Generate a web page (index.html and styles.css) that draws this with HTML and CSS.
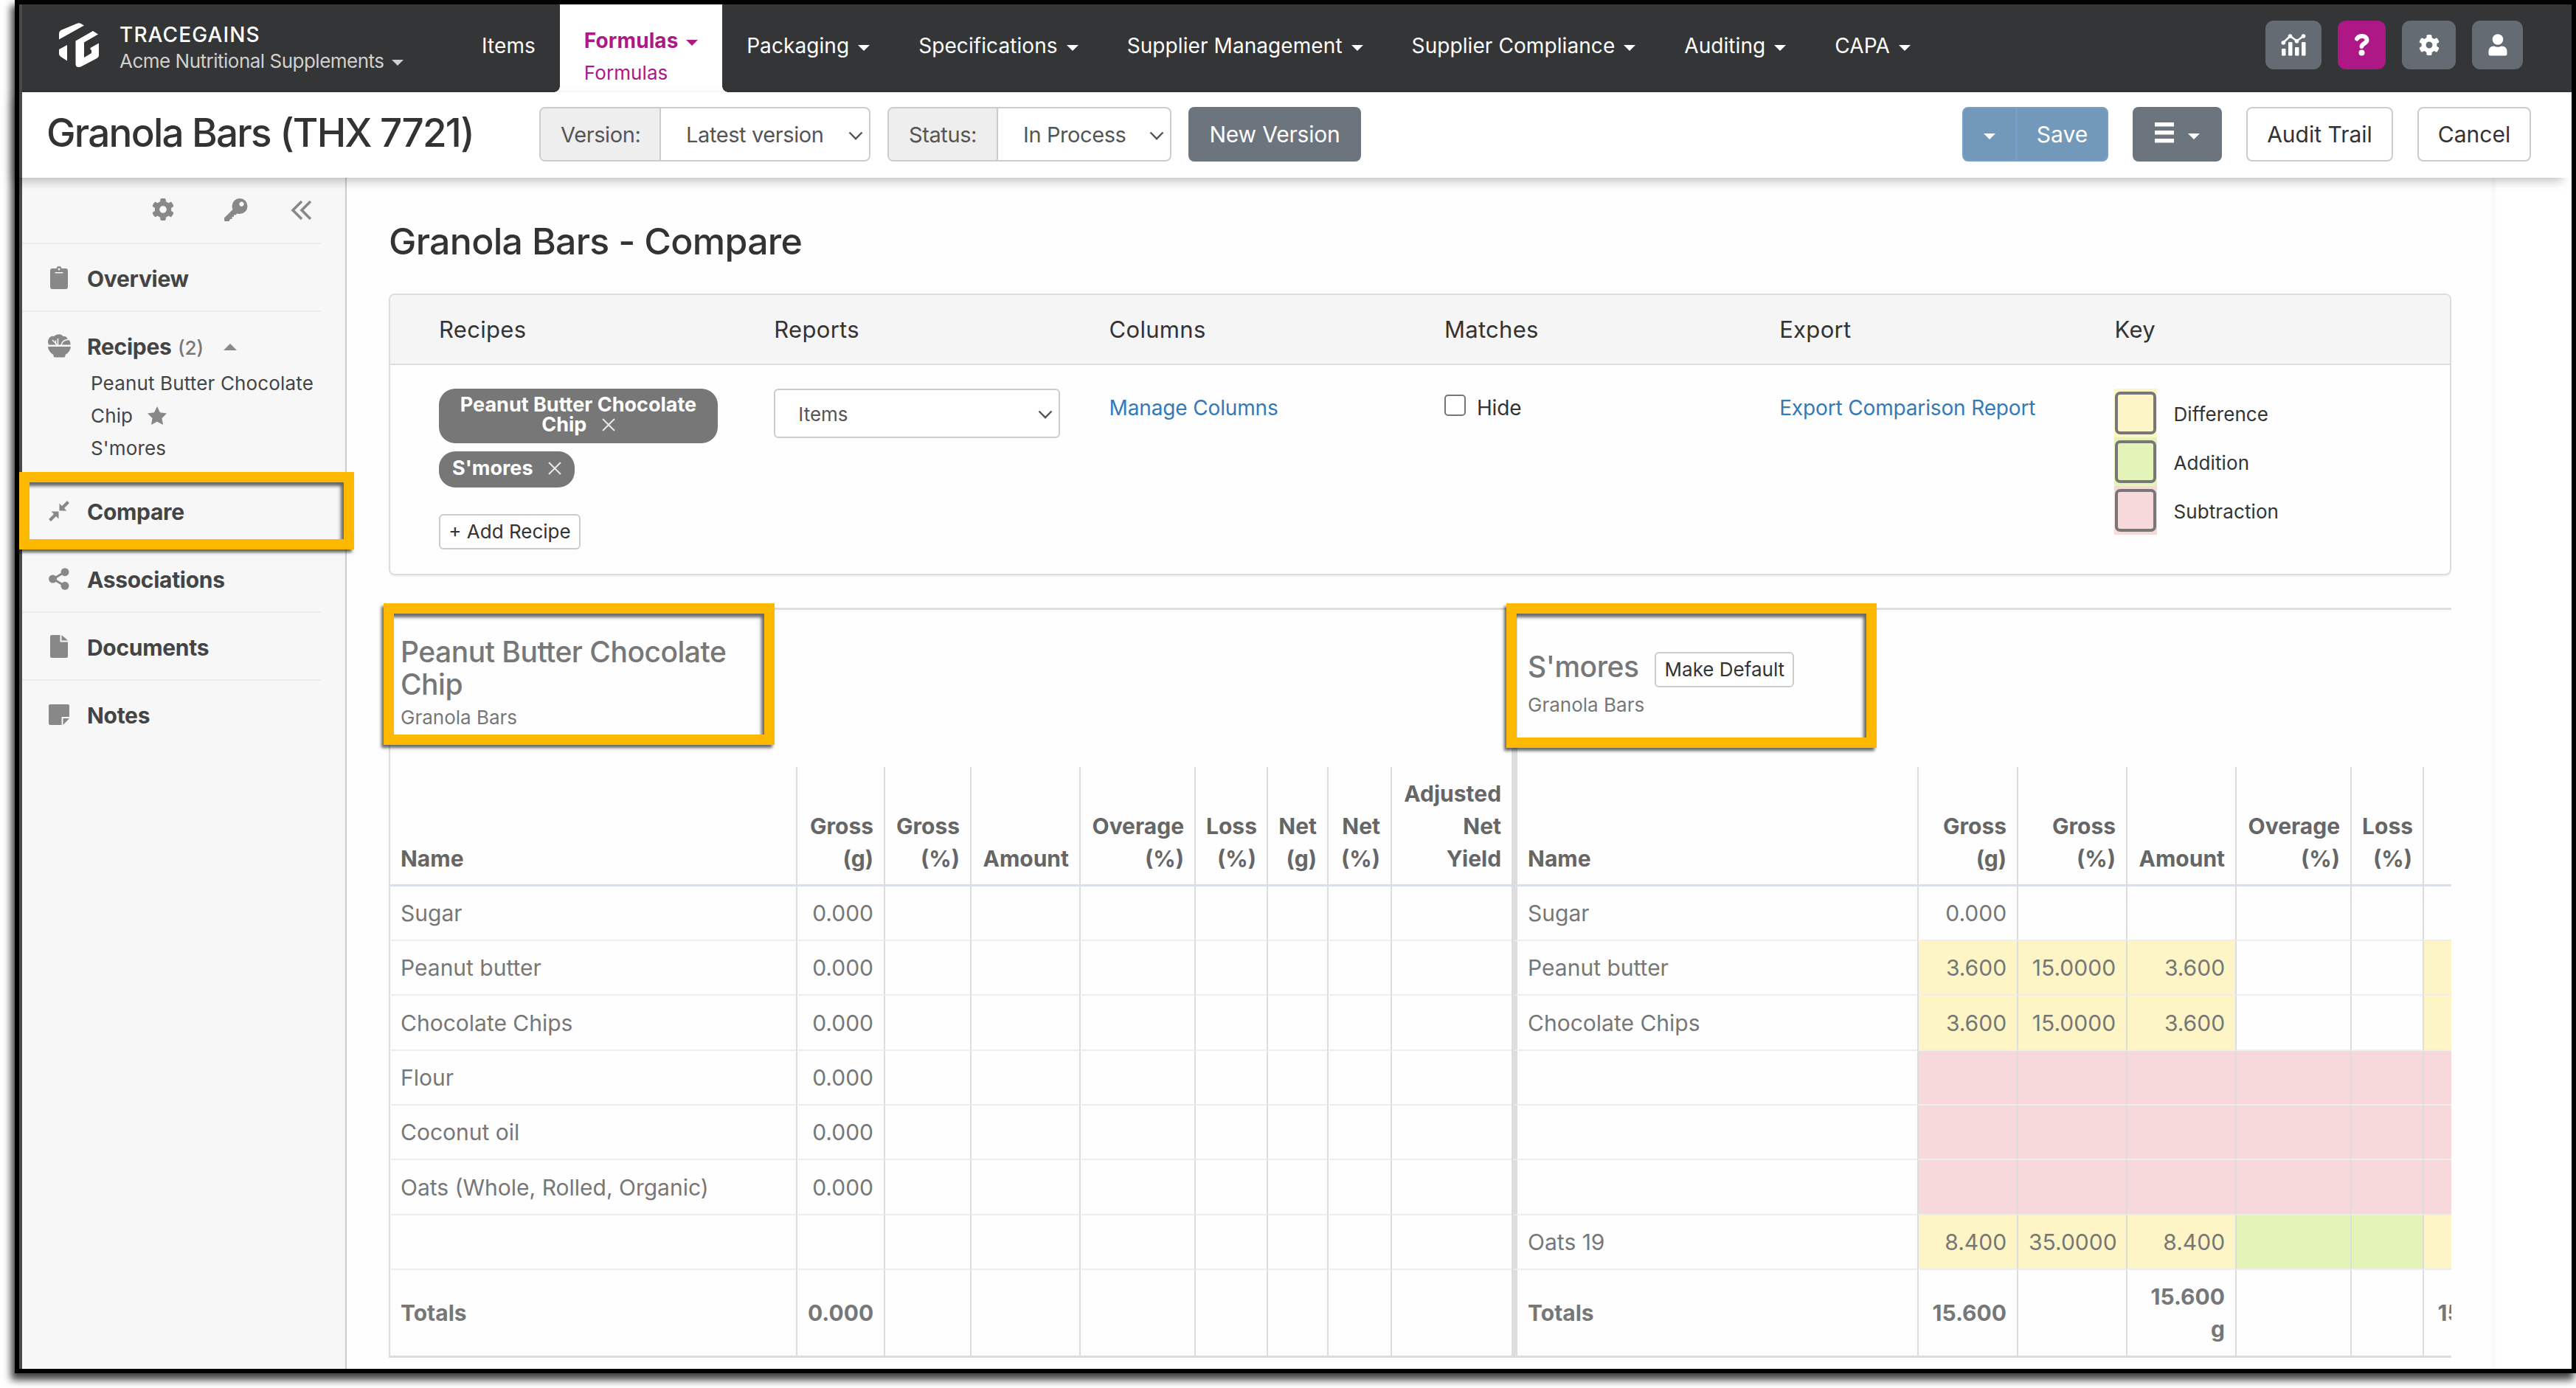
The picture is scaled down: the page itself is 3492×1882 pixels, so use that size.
FILE: index.html
```html
<!DOCTYPE html>
<html lang="en">
  <head>
    <meta charset="UTF-8" />
    <meta name="viewport" content="width=device-width, initial-scale=1.0" />
    <title>Granola Bars - Compare</title>
    <link rel="stylesheet" href="styles.css">
  </head>
  <body>
    <svg class="sprite">
      <symbol id="gear" viewBox="0 0 30 30">
        <circle cx="15" cy="15" r="8" fill="none" stroke="currentColor" stroke-width="6.4" />
        <g fill="currentColor">
          <rect x="11.2" y="0" width="7.6" height="7" rx="2" />
          <rect x="11.2" y="0" width="7.6" height="7" rx="2" transform="rotate(60 15 15)" />
          <rect x="11.2" y="0" width="7.6" height="7" rx="2" transform="rotate(120 15 15)" />
          <rect x="11.2" y="0" width="7.6" height="7" rx="2" transform="rotate(180 15 15)" />
          <rect x="11.2" y="0" width="7.6" height="7" rx="2" transform="rotate(240 15 15)" />
          <rect x="11.2" y="0" width="7.6" height="7" rx="2" transform="rotate(300 15 15)" />
        </g>
      </symbol>
      <symbol id="chevron" viewBox="0 0 20 12">
        <path d="M1.5 1.5 10 10.2 18.5 1.5" fill="none" stroke="currentColor" stroke-width="2.4" />
      </symbol>
    </svg>

    <div class="window">
      <header class="topbar">
        <svg class="logo" viewBox="0 0 54 60" fill="#fff">
          <path d="M0 22.500V14.500Q0 11.500 2.500 10L24 1Q27 -.5 29.500 1L34 3.500Z" />
          <path d="M11 30V51.500L2.500 46Q0 44.500 0 42V36Z" />
          <path d="M46 11 53 15.500 34 26.500V47L44 41V37L42.500 36V34L54 27.500V44Q54 46.500 51.500 48L29.500 59.500Q22.500 61.500 22.500 55.500V24.500Z" />
        </svg>
        <div class="brand">
          <div class="brand-name">TRACEGAINS</div>
          <div class="brand-company">Acme Nutritional Supplements <i class="caret"></i></div>
        </div>
        <nav class="nav">
          <a class="nav-item">Items</a>
          <a class="nav-item active">
            <span class="nav-title">Formulas <i class="caret"></i></span>
            <span class="nav-sub">Formulas</span>
          </a>
          <a class="nav-item">Packaging <i class="caret"></i></a>
          <a class="nav-item">Specifications <i class="caret"></i></a>
          <a class="nav-item">Supplier Management <i class="caret"></i></a>
          <a class="nav-item">Supplier Compliance <i class="caret"></i></a>
          <a class="nav-item">Auditing <i class="caret"></i></a>
          <a class="nav-item">CAPA <i class="caret"></i></a>
        </nav>
        <div class="tools">
          <a class="tool tool-chart">
            <svg width="34" height="30" viewBox="0 0 34 30" fill="#fff">
              <path d="M3.500 11.500 12.500 3 21.500 9.500 30.500 3" fill="none" stroke="#fff" stroke-width="2.600" />
              <circle cx="3.300" cy="12" r="2.800" /><circle cx="12.500" cy="3" r="2.800" />
              <circle cx="21.500" cy="9.800" r="2.800" /><circle cx="30.500" cy="3" r="2.800" />
              <rect x="1" y="20" width="5.500" height="9.500" rx="1" />
              <rect x="10" y="11" width="5.500" height="18.500" rx="1" />
              <rect x="19" y="18" width="5.500" height="11.500" rx="1" />
              <rect x="28" y="11" width="5.500" height="18.500" rx="1" />
            </svg>
          </a>
          <a class="tool tool-help">
            <svg width="20" height="30" viewBox="0 0 20 30">
              <path d="M3 6.500C6 1.500 16.500 1.500 16.500 8.500 16.500 13 10 12.500 9.500 17" fill="none" stroke="#fff" stroke-width="6" stroke-linecap="round" />
              <circle cx="9.500" cy="25.500" r="4" fill="#fff" />
            </svg>
          </a>
          <a class="tool tool-gear"><svg width="28" height="28"><use href="#gear" /></svg></a>
          <a class="tool tool-user">
            <svg width="26" height="30" viewBox="0 0 26 30" fill="#fff">
              <circle cx="13" cy="7.500" r="7.300" />
              <path d="M8 16.500Q13 19 18 16.500 25.500 16.500 25.500 24V27Q25.500 29.500 23 29.500H3Q.5 29.500 .5 27V24Q.5 16.500 8 16.500Z" />
            </svg>
          </a>
        </div>
      </header>

      <div class="actionbar">
        <h1 class="page-title">Granola Bars (THX 7721)</h1>
        <div class="field field-version">
          <span class="addon">Version:</span>
          <span class="value">Latest version</span>
          <svg class="chevron"><use href="#chevron" /></svg>
        </div>
        <div class="field field-status">
          <span class="addon">Status:</span>
          <span class="value">In Process</span>
          <svg class="chevron"><use href="#chevron" /></svg>
        </div>
        <a class="btn btn-grey btn-new">New Version</a>
        <div class="actions">
          <div class="btn-group">
            <a class="btn btn-toggle"><i class="caret"></i></a>
            <a class="btn btn-save">Save</a>
          </div>
          <a class="btn btn-grey btn-menu">
            <svg width="26" height="28" viewBox="0 0 26 28" fill="#fff">
              <rect y="0" width="26" height="5.500" /><rect y="11" width="26" height="5.500" /><rect y="22" width="26" height="5.500" />
            </svg>
            <i class="caret"></i>
          </a>
          <a class="btn btn-default btn-audit">Audit Trail</a>
          <a class="btn btn-default btn-cancel">Cancel</a>
        </div>
      </div>

      <div class="layout">
        <aside class="sidebar">
          <div class="side-tools">
            <svg width="30" height="30"><use href="#gear" /></svg>
            <svg width="32" height="32" viewBox="0 0 32 32" fill="currentColor">
              <path fill-rule="evenodd" d="M21 0A10.500 10.500 0 0 1 21 21Q19 21 17.500 20.500L15.500 22.500H13V25H10.500V28H8L6.500 31H1.500Q0 31 0 29.500V26.500L11.500 15Q10.500 13 10.500 10.500A10.500 10.500 0 0 1 21 0ZM23.500 4.500A3.200 3.200 0 1 0 23.510 4.500Z" />
            </svg>
            <svg width="28" height="28" viewBox="0 0 28 28" fill="none" stroke="currentColor" stroke-width="3.600">
              <path d="M15 2 3 14 15 26M27 2 15 14 27 26" />
            </svg>
          </div>
          <div class="side-row">
            <span class="side-icon">
              <svg width="24" height="32" viewBox="0 0 24 32" fill="currentColor">
                <path fill-rule="evenodd" d="M3 3H8.500Q9 0 12 0 15 0 15.500 3H21Q24 3 24 6V28Q24 31 21 31H3Q0 31 0 28V6Q0 3 3 3ZM12 2.500A1.500 1.500 0 1 0 12.010 2.500ZM6.500 8V9.500H17.500V8Z" />
              </svg>
            </span>
            <b>Overview</b>
          </div>
          <div class="side-row side-recipes">
            <span class="side-icon">
              <svg width="31" height="32" viewBox="0 0 31 32" fill="currentColor">
                <path d="M0 17H31Q30.500 24 23.500 28V29.500Q23.500 31.500 21.500 31.500H9.500Q7.500 31.500 7.500 29.500V28Q.5 24 0 17Z" />
                <path d="M1 14.500Q-1 10 1 6.500 3.500 2 8 3 11 0 14 .5 18-.5 20.500 3 25.500 2.500 26 6 31 9 30.500 14.500Z" />
                <path d="M6 8 13.500 15.500M13.500 6V15M10.500 8.500V14M18 15Q19.500 7.500 28 7.500" fill="none" stroke="#f7f7f7" stroke-width="1.500" />
              </svg>
            </span>
            <b>Recipes</b> <span class="side-count">(2)</span>
            <i class="caret-up"></i>
            <div class="side-list">
              <div>Peanut Butter Chocolate</div>
              <div>Chip
                <svg class="star" width="26" height="26" viewBox="0 0 26 26" fill="currentColor"><path d="M13 0 17 8.300 26 9.600 19.500 16 21 25 13 20.800 5 25 6.500 16 0 9.600 9 8.300Z" /></svg>
              </div>
              <div>S'mores</div>
            </div>
          </div>
          <div class="side-row">
            <span class="side-icon">
              <svg width="28" height="28" viewBox="0 0 28 28" fill="currentColor">
                <path d="M14.500 13.500V3.500L18 7 25 0 28 3 21 10 24.500 13.500ZM13.500 14.500V24.500L10 21 3 28 0 25 7 18 3.500 14.500Z" />
              </svg>
            </span>
            <b>Compare</b>
          </div>
          <div class="side-row">
            <span class="side-icon">
              <svg width="28" height="30" viewBox="0 0 28 30" fill="currentColor">
                <path d="M22 5.500 6 15 22 24.500" fill="none" stroke="currentColor" stroke-width="3" />
                <circle cx="22" cy="5.700" r="5.500" /><circle cx="5.600" cy="15" r="5.500" /><circle cx="22" cy="24.300" r="5.500" />
              </svg>
            </span>
            <b>Associations</b>
          </div>
          <div class="side-row">
            <span class="side-icon">
              <svg width="24" height="32" viewBox="0 0 24 32" fill="currentColor">
                <path d="M2 0H13.500V9.500H24V29Q24 31 22 31H2Q0 31 0 29V2Q0 0 2 0ZM15.500 0 24 7.500H15.500Z" />
              </svg>
            </span>
            <b>Documents</b>
          </div>
          <div class="side-row side-last">
            <span class="side-icon">
              <svg width="28" height="28" viewBox="0 0 28 28" fill="currentColor">
                <path d="M2 0H26Q28 0 28 2V17H17.500V28H2Q0 28 0 26V2Q0 0 2 0ZM28 19 19.500 28V19Z" />
              </svg>
            </span>
            <b>Notes</b>
          </div>
          <div class="highlight highlight-side"></div>
        </aside>

        <main class="content">
          <h2 class="content-title">Granola Bars - Compare</h2>

          <section class="panel">
            <div class="panel-head">
              <span>Recipes</span><span>Reports</span><span>Columns</span>
              <span>Matches</span><span>Export</span><span>Key</span>
            </div>
            <div class="panel-body">
              <div>
                <div class="pill pill-wide">Peanut Butter Chocolate<br />Chip
                  <svg class="remove" viewBox="0 0 18 18"><path d="M1 1 17 17M17 1 1 17" /></svg>
                </div>
                <div class="pill">S'mores
                  <svg class="remove" viewBox="0 0 18 18"><path d="M1 1 17 17M17 1 1 17" /></svg>
                </div>
                <a class="btn-small btn-add">+ Add Recipe</a>
              </div>
              <div>
                <div class="report-select">Items <svg class="chevron"><use href="#chevron" /></svg></div>
              </div>
              <div class="panel-text"><a class="link">Manage Columns</a></div>
              <div class="panel-text hide-option"><span class="checkbox"></span>Hide</div>
              <div class="panel-text"><a class="link">Export Comparison Report</a></div>
              <div>
                <div class="key-row"><span class="swatch diff"><i></i></span>Difference</div>
                <div class="key-row"><span class="swatch add"><i></i></span>Addition</div>
                <div class="key-row"><span class="swatch sub"><i></i></span>Subtraction</div>
              </div>
            </div>
          </section>

          <div class="compare">
            <table class="compare-table">
              <colgroup>
                <col style="width: 552px" /><col style="width: 119px" /><col style="width: 117px" />
                <col style="width: 148px" /><col style="width: 156px" /><col style="width: 98px" />
                <col style="width: 82px" /><col style="width: 86px" /><col style="width: 164px" />
                <col style="width: 550px" /><col style="width: 135px" /><col style="width: 148px" />
                <col style="width: 148px" /><col style="width: 156px" /><col style="width: 98px" />
                <col style="width: 135px" />
              </colgroup>
              <thead>
                <tr class="recipe-row">
                  <th colspan="9" class="recipe-cell">
                    <div class="recipe-name">Peanut Butter Chocolate<br />Chip</div>
                    <div class="recipe-family">Granola Bars</div>
                  </th>
                  <th colspan="7" class="recipe-cell recipe-right split">
                    <div class="recipe-name">S'mores <a class="btn-small btn-make">Make Default</a></div>
                    <div class="recipe-family">Granola Bars</div>
                  </th>
                </tr>
                <tr class="head-row">
                  <th>Name</th><th>Gross<br />(g)</th><th>Gross<br />(%)</th><th>Amount</th>
                  <th>Overage<br />(%)</th><th>Loss<br />(%)</th><th>Net<br />(g)</th><th>Net<br />(%)</th>
                  <th>Adjusted<br />Net<br />Yield</th>
                  <th class="split">Name</th><th>Gross<br />(g)</th><th>Gross<br />(%)</th><th>Amount</th>
                  <th>Overage<br />(%)</th><th>Loss<br />(%)</th><th></th>
                </tr>
              </thead>
              <tbody>
                <tr>
                  <td>Sugar</td><td>0.000</td><td></td><td></td><td></td><td></td><td></td><td></td><td></td>
                  <td class="split">Sugar</td><td>0.000</td><td></td><td></td><td></td><td></td><td></td>
                </tr>
                <tr>
                  <td>Peanut butter</td><td>0.000</td><td></td><td></td><td></td><td></td><td></td><td></td><td></td>
                  <td class="split">Peanut butter</td><td class="diff">3.600</td><td class="diff">15.0000</td><td class="diff">3.600</td><td></td><td></td><td class="diff"></td>
                </tr>
                <tr>
                  <td>Chocolate Chips</td><td>0.000</td><td></td><td></td><td></td><td></td><td></td><td></td><td></td>
                  <td class="split">Chocolate Chips</td><td class="diff">3.600</td><td class="diff">15.0000</td><td class="diff">3.600</td><td></td><td></td><td class="diff"></td>
                </tr>
                <tr>
                  <td>Flour</td><td>0.000</td><td></td><td></td><td></td><td></td><td></td><td></td><td></td>
                  <td class="split"></td><td class="sub"></td><td class="sub"></td><td class="sub"></td><td class="sub"></td><td class="sub"></td><td class="sub"></td>
                </tr>
                <tr>
                  <td>Coconut oil</td><td>0.000</td><td></td><td></td><td></td><td></td><td></td><td></td><td></td>
                  <td class="split"></td><td class="sub"></td><td class="sub"></td><td class="sub"></td><td class="sub"></td><td class="sub"></td><td class="sub"></td>
                </tr>
                <tr>
                  <td>Oats (Whole, Rolled, Organic)</td><td>0.000</td><td></td><td></td><td></td><td></td><td></td><td></td><td></td>
                  <td class="split"></td><td class="sub"></td><td class="sub"></td><td class="sub"></td><td class="sub"></td><td class="sub"></td><td class="sub"></td>
                </tr>
                <tr>
                  <td></td><td></td><td></td><td></td><td></td><td></td><td></td><td></td><td></td>
                  <td class="split">Oats 19</td><td class="diff">8.400</td><td class="diff">35.0000</td><td class="diff">8.400</td><td class="add"></td><td class="add"></td><td class="diff"></td>
                </tr>
                <tr class="totals">
                  <td>Totals</td><td>0.000</td><td></td><td></td><td></td><td></td><td></td><td></td><td></td>
                  <td class="split">Totals</td><td>15.600</td><td></td><td>15.600<br />g</td><td></td><td></td><td>15.600</td>
                </tr>
              </tbody>
            </table>
          </div>
          <div class="highlight highlight-left"></div>
          <div class="highlight highlight-right"></div>
        </main>
        <div class="gutter"></div>
      </div>
    </div>
  </body>
</html>
```

FILE: styles.css
```css
* {
  box-sizing: border-box;
}
body {
  margin: 0;
  padding-left: 20px;
  height: 1882px;
  overflow: hidden;
  background: #fff;
  font-family: Inter, "Liberation Sans", sans-serif;
  font-size: 30px;
  color: #333;
}
h1,
h2 {
  margin: 0;
  font-weight: 500;
}
svg {
  display: block;
  flex: none;
}
.sprite {
  position: absolute;
  width: 0;
  height: 0;
}
.window {
  display: flex;
  flex-direction: column;
  height: 1862px;
  border: 6px solid #000;
  box-shadow: -4px 8px 10px 1px rgba(0, 0, 0, 0.75);
}

/* top bar */
.topbar {
  display: flex;
  height: 119px;
  padding-left: 54px;
  border-left: 4px solid #4a4a4a;
  background: #343536;
  color: #fff;
}
.logo {
  width: 54px;
  height: 60px;
  margin: 25px 28px 0 -4px;
}
.brand {
  width: 458px;
  padding-top: 23px;
  line-height: 36px;
}
.brand-name {
  font-size: 28px;
  font-weight: 500;
  letter-spacing: 1.1px;
}
.brand-company {
  font-size: 26px;
  color: #d0d0d0;
  letter-spacing: -0.5px;
}
.caret {
  display: inline-block;
  border: 8px solid transparent;
  border-top-color: currentColor;
  border-bottom: 0;
  vertical-align: 3px;
  margin-left: 4px;
}
.nav {
  display: flex;
}
.nav-item {
  padding: 36px 33px 0;
  font-size: 28px;
  letter-spacing: 0.08px;
  line-height: 40px;
  white-space: nowrap;
}
.nav-item.active {
  padding-top: 29px;
  background: #fff;
  color: #ad1886;
  position: relative;
}
/* dark corners rounding off the foot of the tab */
.nav-item.active::before,
.nav-item.active::after {
  content: "";
  position: absolute;
  bottom: 0;
  width: 8px;
  height: 8px;
}
.nav-item.active::before {
  left: -8px;
  background: radial-gradient(circle at 0 0, #343536 7.5px, #fff 8px);
}
.nav-item.active::after {
  right: -8px;
  background: radial-gradient(circle at 100% 0, #343536 7.5px, #fff 8px);
}
.nav-title {
  display: block;
  font-weight: 700;
}
.nav-sub {
  display: block;
  margin-top: 4px;
  font-size: 26px;
}
.tools {
  display: flex;
  gap: 22px;
  margin: 22px 66px 0 auto;
}
.tool {
  display: flex;
  align-items: center;
  justify-content: center;
  height: 66px;
  border-radius: 11px;
  background: #646b73;
}
.tool-chart {
  width: 76px;
}
.tool-help {
  width: 65px;
  background: #ad1886;
}
.tool-gear {
  width: 73px;
}
.tool-user {
  width: 69px;
}

/* action bar */
.actionbar {
  display: flex;
  height: 116px;
  padding: 20px 55px 0 33px;
  border-left: 4px solid #4a4a4a;
  background: #fff;
  position: relative;
  z-index: 1;
  box-shadow: -10px 6px 14px -2px rgba(0, 0, 0, 0.26);
}
.page-title {
  flex: 0 0 668px;
  font-size: 53px;
  line-height: 70px;
  letter-spacing: -1.8px;
  white-space: nowrap;
}
.field {
  display: flex;
  height: 74px;
  margin-right: 23px;
  border: 2px solid #ccc;
  border-radius: 8px;
  font-size: 29px;
  letter-spacing: -0.4px;
  line-height: 72px;
  color: #555;
  overflow: hidden;
}
.addon {
  padding-left: 27px;
  border-right: 2px solid #ccc;
  background: #eee;
}
.value {
  flex: 1;
  padding-left: 34px;
}
.chevron {
  width: 20px;
  height: 12px;
  margin: 31px 8px 0 0;
}
.field-version {
  width: 449px;
}
.field-version .addon {
  width: 163px;
}
.field-status {
  width: 385px;
}
.field-status .addon {
  width: 148px;
}
.btn {
  display: flex;
  align-items: center;
  justify-content: center;
  height: 74px;
  border-radius: 8px;
  white-space: nowrap;
}
.btn-grey {
  background: #6c757d;
  color: #fff;
}
.btn-default {
  border: 2px solid #ccc;
  background: #fff;
}
.btn-new {
  width: 234px;
  letter-spacing: -0.2px;
}
.actions {
  display: flex;
  gap: 33px;
  margin-left: auto;
}
.btn-group {
  display: flex;
}
.btn-toggle,
.btn-save {
  border: 2px solid #76a0c5;
  background: #7399ba;
  color: #fff;
}
.btn-toggle {
  width: 74px;
  border-radius: 8px 0 0 8px;
}
.btn-toggle .caret {
  margin: 6px 0 0;
}
.btn-save {
  width: 124px;
  border-left-width: 1px;
  border-radius: 0 8px 8px 0;
}
.btn-menu {
  width: 121px;
}
.btn-menu svg {
  margin-top: -4px;
}
.btn-menu .caret {
  margin: 6px 0 0 19px;
}
.btn-audit {
  width: 199px;
}
.btn-cancel {
  width: 154px;
}

/* sidebar */
.layout {
  display: flex;
  flex: 1;
  min-height: 0;
}
.sidebar {
  flex: 0 0 444px;
  position: relative;
  padding-right: 33px;
  border-left: 4px solid #4a4a4a;
  border-right: 2px solid #ccc;
  background: #f7f7f7;
  color: #444;
}
.side-tools {
  display: flex;
  justify-content: flex-end;
  height: 90px;
  padding: 28px 13px 0 0;
  border-bottom: 2px solid #ececec;
  color: #888;
}
.side-tools svg + svg {
  margin-left: 68px;
}
.side-tools svg:last-child {
  margin: 2px 0 0 58px;
}
.side-row {
  height: 92px;
  padding: 27px 0 0 88px;
  border-bottom: 2px solid #ececec;
  line-height: 40px;
  position: relative;
  white-space: nowrap;
}
.side-row b {
  font-weight: 700;
  letter-spacing: -0.3px;
}
.side-icon {
  position: absolute;
  left: 29px;
  top: 26px;
  width: 42px;
  height: 40px;
  display: flex;
  align-items: center;
  justify-content: center;
  color: #888;
}
.side-recipes {
  height: 224px;
}
.side-last {
  border: 0;
}
.side-count {
  font-size: 26px;
  font-weight: 500;
  color: #777;
}
.caret-up {
  display: inline-block;
  margin-left: 18px;
  border: 9px solid transparent;
  border-bottom-color: #888;
  border-top: 0;
  vertical-align: 6px;
}
.side-list {
  padding: 6px 0 0 5px;
  font-size: 26px;
  letter-spacing: 0.15px;
  line-height: 44px;
}
.star {
  display: inline-block;
  margin-left: 12px;
  vertical-align: -4px;
  color: #888;
}

/* callout boxes */
.highlight {
  position: absolute;
  border: 14px solid #fcb900;
  box-shadow: -3px 4px 4px rgba(0, 0, 0, 0.6), inset -4px 5px 4px rgba(0, 0, 0, 0.6);
}
.highlight-side {
  left: -4px;
  top: 399px;
  width: 454px;
  height: 105px;
  z-index: 1;
}
.highlight-left {
  left: 50px;
  top: 577px;
  width: 530px;
  height: 192px;
}
.highlight-right {
  left: 1572px;
  top: 577px;
  width: 502px;
  height: 196px;
}

/* content */
.content {
  width: 2908px;
  flex: none;
  position: relative;
  padding: 56px 55px 0 57px;
  background: #fefefe;
}
.gutter {
  flex: 1;
  background: linear-gradient(90deg, #f8f8f8, #fff 8px);
}
.content-title {
  font-size: 50px;
  line-height: 60px;
  letter-spacing: -0.7px;
}
.panel {
  height: 382px;
  margin-top: 41px;
  border: 2px solid #ddd;
  border-radius: 8px;
  box-shadow: 0 2px 2px rgba(0, 0, 0, 0.05);
}
.panel-head,
.panel-body {
  display: grid;
  grid-template-columns: repeat(6, 454.3px);
  padding-left: 66px;
}
.panel-head {
  height: 95px;
  border-bottom: 2px solid #ddd;
  border-radius: 6px 6px 0 0;
  background: #f5f5f5;
  font-size: 31px;
  letter-spacing: 0.3px;
  line-height: 93px;
}
.panel-body {
  padding-top: 32px;
  font-size: 26px;
}
.pill {
  width: 184px;
  height: 49px;
  margin-bottom: 11px;
  padding: 9px 0 0 18px;
  border-radius: 22px;
  background: #777;
  color: #fff;
  font-size: 27px;
  font-weight: 700;
  line-height: 27px;
}
.pill-wide {
  width: 378px;
  height: 74px;
  padding: 8px 0 0;
  text-align: center;
}
.remove {
  display: inline-block;
  width: 18px;
  height: 18px;
  margin-left: 14px;
  vertical-align: 0;
  stroke: #e8e8e8;
  stroke-width: 2;
}
.btn-small {
  display: inline-block;
  height: 48px;
  border: 2px solid #ccc;
  border-radius: 6px;
  background: #fff;
  color: #333;
  font-size: 26px;
  font-weight: 400;
  line-height: 44px;
  text-align: center;
}
.btn-add {
  width: 192px;
  margin-top: 25px;
}
.report-select {
  display: flex;
  justify-content: space-between;
  width: 388px;
  height: 67px;
  padding-left: 31px;
  border: 2px solid #ccc;
  border-radius: 6px;
  background: #fff;
  color: #555;
  line-height: 65px;
}
.report-select .chevron {
  margin: 27px 8px 0 0;
}
.panel-text {
  font-size: 28px;
  letter-spacing: -0.15px;
  line-height: 52px;
}
.link {
  color: #337ab7;
}
.hide-option {
  display: flex;
}
.checkbox {
  width: 29px;
  height: 29px;
  margin: 8px 15px 0 0;
  border: 2px solid #767676;
  border-radius: 5px;
  background: #fff;
}
.key-row {
  display: flex;
  height: 66px;
  letter-spacing: 0.1px;
  line-height: 69px;
}
.swatch {
  width: 58px;
  padding: 4px 1px;
  margin-right: 22px;
}
.swatch i {
  display: block;
  height: 58px;
  border: 4px solid #777;
  border-radius: 7px;
}
.diff {
  background: #fdf5c5;
}
.add {
  background: #e4f4b9;
}
.sub {
  background: #f8d9db;
}

/* comparison table */
.compare {
  margin-top: 44px;
  overflow: hidden;
}
.compare-table {
  width: 2892px;
  table-layout: fixed;
  border-collapse: separate;
  border-spacing: 0;
  color: #777;
}
th,
td {
  padding: 0 14px;
  border-left: 2px solid #ddd;
  text-align: right;
  line-height: 44px;
}
td {
  height: 74px;
  border-bottom: 2px solid #eee;
}
tbody tr:nth-child(3n) td {
  height: 75px;
}
.split {
  border-left: 8px solid #ddd;
}
td:first-child,
th:first-child,
.split {
  text-align: left;
}
.recipe-cell {
  height: 216px;
  padding-top: 35px;
  border-top: 3px solid #ddd;
  vertical-align: top;
}
.recipe-right {
  padding-top: 53px;
}
.recipe-name {
  font-size: 39px;
  font-weight: 500;
  letter-spacing: -0.5px;
}
.recipe-right .recipe-name {
  height: 53px;
  line-height: 48px;
}
.btn-make {
  width: 189px;
  margin-left: 12px;
  letter-spacing: 0;
  vertical-align: 1px;
}
.recipe-family {
  margin-top: 5px;
  font-size: 26px;
  font-weight: 400;
  line-height: 36px;
}
.head-row th {
  height: 162px;
  padding-bottom: 13px;
  border-bottom: 3px solid #d7e1ee;
  vertical-align: bottom;
  font-weight: 700;
  color: #666;
}
.totals td {
  height: 119px;
  border-bottom: 3px solid #ddd;
  font-weight: 700;
}
```
